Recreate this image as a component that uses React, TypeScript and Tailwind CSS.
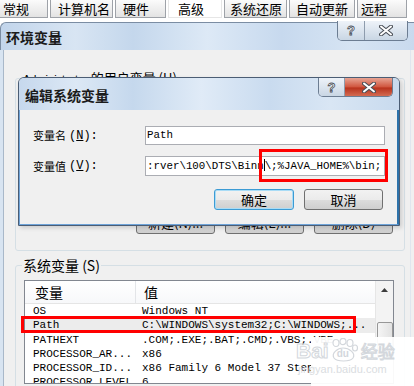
const tabs = [
  { label: "常规", w: "w-[51px] pl-[5px]", active: false },
  { label: "计算机名", w: "w-[63px] pl-[7px]", active: false },
  { label: "硬件", w: "w-[51px] pl-[7px]", active: false },
  { label: "高级", w: "w-[54px] pl-[9px]", active: true },
  { label: "系统还原", w: "w-[63px] pl-[5px]", active: false },
  { label: "自动更新", w: "w-[66px] pl-[6px]", active: false },
  { label: "远程", w: "w-[50px] pl-[3px]", active: false },
];

const rows = [
  { name: "OS", value: "Windows NT" },
  { name: "Path", value: "C:\\WINDOWS\\system32;C:\\WINDOWS;...", selected: true },
  { name: "PATHEXT", value: ".COM;.EXE;.BAT;.CMD;.VBS;.VBE" },
  { name: "PROCESSOR_AR...", value: "x86" },
  { name: "PROCESSOR_ID...", value: "x86 Family 6 Model 37 Step" },
  { name: "PROCESSOR_LEVEL", value: "6" },
];

const CloseGlyph = () => (
  <svg width="14" height="11" viewBox="0 0 14 11">
    <path
      d="M2 1.5 L12 9.5 M12 1.5 L2 9.5"
      stroke="#4a4f57"
      strokeWidth="4"
      strokeLinecap="round"
    />
    <path
      d="M2 1.5 L12 9.5 M12 1.5 L2 9.5"
      stroke="#ffffff"
      strokeWidth="2"
      strokeLinecap="round"
    />
  </svg>
);

const CaptionButtons = ({ red, wq, wx }: { red: boolean; wq: string; wx: string }) => (
  <div className="flex self-start border border-t-0 border-[#6c7d92] rounded-b-[5px] overflow-hidden">
    <div
      className={`${wq} flex items-center justify-center border-r border-[#8e9cad] bg-[linear-gradient(#eef3f9,#c9d6e4)] text-[13px] leading-none font-bold text-white [-webkit-text-stroke:0.8px_#4a4f57] font-['Liberation_Sans',sans-serif]`}
    >
      ?
    </div>
    <div
      className={`${wx} flex items-center justify-center ${
        red
          ? "bg-[linear-gradient(#e8a493,#d0553e_50%,#b8321c_55%,#d36b52)]"
          : "bg-[linear-gradient(#eef3f9,#c9d6e4)]"
      }`}
    >
      <CloseGlyph />
    </div>
  </div>
);

export default function App() {
  return (
    <div className="relative w-[414px] h-[386px] overflow-hidden bg-white text-black font-['Noto_Sans_CJK_SC',sans-serif]">
      {/* property sheet tabs */}
      <div className="flex h-[18px] ml-[-3px] gap-[2px]">
        {tabs.map((t) => (
          <div
            key={t.label}
            className={`${t.w} flex items-center text-[13px] leading-[16px] border-x border-b ${
              t.active
                ? "bg-white border-[#e6e6e6]"
                : "border-[#9ea2a8] bg-[linear-gradient(#fbfbfb,#e3e3e3)]"
            }`}
          >
            {t.label}
          </div>
        ))}
      </div>

      {/* environment variables window */}
      <div className="mt-[4px]">
        <div className="h-[28px] flex items-center pl-[5px] rounded-tl-[6px] border-t border-l border-[#7b8da3] bg-[linear-gradient(90deg,#c2d5eb_0%,#d8e5f3_18%,#c4d7ec_32%,#dde9f6_50%,#c7d9ee_68%,#d6e4f3_85%,#c9daee_100%)]">
          <span className="text-[14px] leading-none font-bold text-[#1b1b1b]">环境变量</span>
          <div className="flex-1" />
          <div className="-mt-[2px] mr-[6px] self-start">
            <CaptionButtons red={false} wq="w-[27px] h-[19px]" wx="w-[42px] h-[19px]" />
          </div>
        </div>

        <div className="flex">
          <div className="w-[4px] bg-[#d8e4f1] border-r border-[#a9b8c9]" />
          <div className="flex-1 bg-[#f0f0f0] pl-[11px] pr-[5px] pb-[20px]">
            <fieldset className="mt-[20px] h-[181px] border border-[#d5dfe5] rounded-[3px]">
              <legend className="ml-[6px] px-[1px] text-[13px] leading-[16px]">
                <span className="text-[11px] font-['Liberation_Sans',sans-serif]">Administrator</span> 的用户变量 (U)
              </legend>
              <div className="mt-[125px] pr-[11px] flex justify-end gap-[10px]">
                {["新建(N)...", "编辑(E)...", "删除(D)"].map((b) => (
                  <div
                    key={b}
                    className="w-[79px] h-[22px] flex items-center justify-center text-[13px] rounded-[3px] border border-[#707070] bg-[linear-gradient(#f2f2f2,#ebebeb_50%,#dddddd_51%,#cfcfcf)]"
                  >
                    {b}
                  </div>
                ))}
              </div>
            </fieldset>

            <fieldset className="mt-[6px] h-[200px] border border-[#d5dfe5] rounded-[3px]">
              <legend className="ml-[6px] px-[1px] text-[14px] leading-[16px]">系统变量 (S)</legend>
              <div className="mt-[7px] ml-[8px] w-[370px] h-[104px] border border-[#828790] bg-white flex overflow-hidden">
                <div className="flex-1">
                  <div className="h-[23px] flex border-b border-[#e5e5e5] bg-[linear-gradient(#ffffff,#f7f8fa)] text-[14px] leading-[22px]">
                    <div className="w-[111px] pl-[10px] border-r border-[#e3e5e8]">变量</div>
                    <div className="pl-[8px]">值</div>
                  </div>
                  {rows.map((r) => (
                    <div
                      key={r.name}
                      className={`h-[14.3px] flex whitespace-nowrap text-[11px] leading-[14.3px] font-['Liberation_Mono',monospace] ${
                        r.selected ? "bg-[#ececec]" : ""
                      }`}
                    >
                      <div className="w-[111px] pl-[8px]">{r.name}</div>
                      <div className="pl-[6px]">{r.value}</div>
                    </div>
                  ))}
                </div>
                <div className="w-[18px] bg-[#f3f3f3] border-l border-[#e6e6e6] flex flex-col items-center">
                  <div className="h-[18px] flex items-center justify-center">
                    <svg width="7" height="4" viewBox="0 0 7 4">
                      <path d="M0 4 L3.5 0 L7 4 Z" fill="#3c3c3c" />
                    </svg>
                  </div>
                  <div className="mt-[23px] w-[16px] h-[34px] rounded-[2px] border border-[#979797] bg-[linear-gradient(90deg,#f5f5f5,#e2e2e2)]" />
                </div>
              </div>
            </fieldset>
          </div>
          <div className="w-[4px] bg-[#f0f0f0] border-l border-[#dfe6ee]" />
        </div>
      </div>

      {/* edit system variable dialog */}
      <div className="absolute left-[18px] top-[77px] w-[382px] h-[149px] flex flex-col rounded-t-[6px] border border-[#4b5d74] overflow-hidden shadow-[2px_2px_4px_rgba(0,0,0,0.15)]">
        <div className="h-[32px] flex items-center pl-[6px] bg-[linear-gradient(90deg,#c6d8ed_0%,#dce8f5_15%,#c5d8ed_30%,#e0ebf7_48%,#c9dbef_66%,#d9e6f4_82%,#c8daee_100%)]">
          <span className="text-[14px] leading-none font-bold text-[#1b1b1b] pt-[2px]">编辑系统变量</span>
          <div className="flex-1" />
          <div className="mr-[6px] self-start">
            <CaptionButtons red={true} wq="w-[26px] h-[18px]" wx="w-[47px] h-[18px]" />
          </div>
        </div>
        <div className="flex-1 bg-[#f0f0f0] border-l border-b border-[#6ea3d8] border-r-2 border-r-[#2d72aa] pr-[12px]">
          <div className="mt-[16px] flex items-center h-[19px]">
            <div className="w-[125px] pl-[13px] flex items-center">
              <span className="text-[11px] leading-none">变量名</span>
              <span className="ml-[3px] text-[12px] leading-none font-['Liberation_Mono',monospace]">
                (<span className="underline">N</span>):
              </span>
            </div>
            <div className="flex-1 h-[19px] bg-white border border-[#abadb3] pl-[1px] text-[10.8px] leading-[17px] font-['Liberation_Mono',monospace]">
              Path
            </div>
          </div>
          <div className="mt-[11px] flex items-center h-[20px]">
            <div className="w-[125px] pl-[13px] flex items-center">
              <span className="text-[11px] leading-none">变量值</span>
              <span className="ml-[3px] text-[12px] leading-none font-['Liberation_Mono',monospace]">
                (<span className="underline">V</span>):
              </span>
            </div>
            <div className="flex-1 h-[20px] bg-white border border-[#abadb3] pl-[1px] text-[10.8px] leading-[18px] whitespace-nowrap overflow-hidden font-['Liberation_Mono',monospace]">
              :rver\100\DTS\Binn
              <span className="inline-block w-0 h-[12px] border-l border-black align-[-2px]" />
              \;%JAVA_HOME%\bin;
            </div>
          </div>
          <div className="mt-[13px] flex justify-end gap-[10px] pr-[2px]">
            <div className="w-[80px] h-[21px] flex items-center justify-center text-[13px] rounded-[3px] border border-[#3c9bd4] shadow-[inset_0_0_0_1px_#a9dcf6] bg-[linear-gradient(#f2f2f2,#ebebeb_50%,#dddddd_51%,#cfcfcf)]">
              确定
            </div>
            <div className="w-[79px] h-[21px] flex items-center justify-center text-[13px] rounded-[3px] border border-[#707070] bg-[linear-gradient(#f2f2f2,#ebebeb_50%,#dddddd_51%,#cfcfcf)]">
              取消
            </div>
          </div>
        </div>
      </div>

      {/* red annotation boxes */}
      <div className="absolute left-[259px] top-[149px] w-[129px] h-[33px] border-[3px] border-[#ff0000]" />
      <div className="absolute left-[21px] top-[316px] w-[335px] h-[17px] border-[3px] border-[#ff0000]" />

      {/* watermark */}
      <div className="absolute left-[311px] top-[337px] w-[103px] h-[49px] bg-white/95" />
      <div className="absolute left-[296px] top-[338px] flex items-end">
        <span className="text-[21px] leading-[22px] font-bold text-transparent [-webkit-text-stroke:1px_#d3d7dc] font-['Liberation_Sans',sans-serif]">
          Bai
        </span>
        <div className="relative w-[30px] h-[24px]">
          <svg width="30" height="24" viewBox="0 0 30 24" className="absolute left-0 top-0">
            <g fill="none" stroke="#d3d7dc" strokeWidth="1.2">
              <ellipse cx="7" cy="5" rx="3" ry="3.5" />
              <ellipse cx="14" cy="3.5" rx="3" ry="3.2" />
              <ellipse cx="21" cy="5" rx="3" ry="3.5" />
              <ellipse cx="26" cy="10" rx="2.5" ry="3" />
              <path d="M5 20 C2 15 9 10 14 10 C20 10 27 15 24 20 C21 24 8 24 5 20 Z" />
            </g>
          </svg>
          <span className="absolute left-[8px] top-[11px] text-[10px] leading-none font-bold text-[#d3d7dc] font-['Liberation_Sans',sans-serif]">
            du
          </span>
        </div>
        <span className="ml-[2px] text-[17px] leading-[22px] text-transparent [-webkit-text-stroke:1px_#d3d7dc]">
          经验
        </span>
      </div>
      <div className="absolute left-[298px] top-[362px] text-[11px] leading-[14px] text-[#dadde1] font-['Liberation_Sans',sans-serif]">
        jingyan.baidu.com
      </div>
    </div>
  );
}
